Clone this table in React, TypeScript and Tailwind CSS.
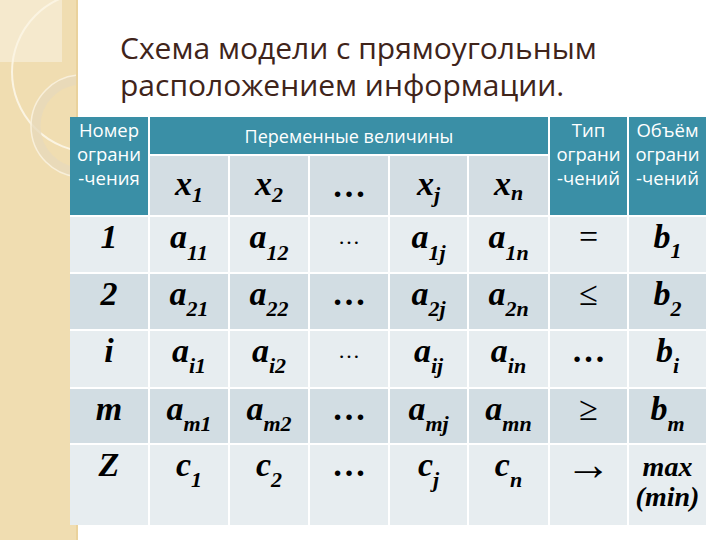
import React from "react";

const teal = "bg-[#3a8fa6]";
const light = "bg-[#e7edf0]";
const dark = "bg-[#d2dde3]";

const math = "font-['Liberation_Serif',serif] font-bold italic text-[34px] leading-[32px] text-black";

// letter with a lowered index
const Sub = ({ base, idx, drop = "top-[11px]" }: { base: string; idx: string; drop?: string }) => (
  <span className={math}>
    {base}
    <span className={`relative ${drop} text-[22px]`}>{idx}</span>
  </span>
);

const Cell = ({
  bg,
  children,
  className = "",
}: {
  bg: string;
  children?: React.ReactNode;
  className?: string;
}) => (
  <div className={`${bg} flex justify-center items-start pt-[4px] ${className}`}>{children}</div>
);

const Dots = ({ big }: { big?: boolean }) =>
  big ? (
    <span className="font-['Liberation_Serif',serif] font-bold text-[34px] leading-[32px]">…</span>
  ) : (
    <span className="font-['Liberation_Serif',serif] text-[22px] leading-[32px]">…</span>
  );

const Sign = ({ s, className = "text-[34px]" }: { s: string; className?: string }) => (
  <span className={`font-['Liberation_Serif',serif] leading-[32px] ${className}`}>{s}</span>
);

type Row = { bg: string; label: string; cells: React.ReactNode[] };

const rows: Row[] = [
  {
    bg: light,
    label: "1",
    cells: [
      <Sub base="a" idx="11" drop="top-[12px]" />,
      <Sub base="a" idx="12" drop="top-[12px]" />,
      <Dots />,
      <Sub base="a" idx="1j" drop="top-[12px]" />,
      <Sub base="a" idx="1n" drop="top-[12px]" />,
      <Sign s="=" />,
      <Sub base="b" idx="1" drop="top-[10px]" />,
    ],
  },
  {
    bg: dark,
    label: "2",
    cells: [
      <Sub base="a" idx="21" />,
      <Sub base="a" idx="22" />,
      <Dots big />,
      <Sub base="a" idx="2j" />,
      <Sub base="a" idx="2n" />,
      <Sign s="≤" />,
      <Sub base="b" idx="2" />,
    ],
  },
  {
    bg: light,
    label: "i",
    cells: [
      <Sub base="a" idx="i1" />,
      <Sub base="a" idx="i2" />,
      <Dots />,
      <Sub base="a" idx="ij" />,
      <Sub base="a" idx="in" />,
      <Dots big />,
      <Sub base="b" idx="i" />,
    ],
  },
  {
    bg: dark,
    label: "m",
    cells: [
      <Sub base="a" idx="m1" />,
      <Sub base="a" idx="m2" />,
      <Dots big />,
      <Sub base="a" idx="mj" />,
      <Sub base="a" idx="mn" />,
      <Sign s="≥" />,
      <Sub base="b" idx="m" />,
    ],
  },
  {
    bg: light,
    label: "Z",
    cells: [
      <Sub base="c" idx="1" />,
      <Sub base="c" idx="2" />,
      <Dots big />,
      <Sub base="c" idx="j" />,
      <Sub base="c" idx="n" />,
      <Sign s="→" className="text-[46px]" />,
      <span className="font-['Liberation_Serif',serif] font-bold italic text-[28px] leading-[30px] text-center pt-[3px]">
        max
        <br />
        (min)
      </span>,
    ],
  },
];

const headText = "font-['Open_Sans',sans-serif] leading-[24px] text-white text-center";

export default function App() {
  return (
    <div className="w-[720px] h-[540px] bg-white overflow-hidden flex">
      {/* beige decorative strip */}
      <div className="w-[78px] shrink-0 h-full bg-[#f0ddb1] border-r-2 border-[#ead29c]">
        <svg width="76" height="540" viewBox="0 0 76 540">
          <rect x="0" y="0" width="62" height="62" fill="#f5e9cd" />
          <circle cx="92" cy="72" r="80" fill="none" stroke="#fbf4e2" strokeWidth="2" />
          <circle cx="82" cy="126" r="46" fill="none" stroke="#e7d9bb" strokeWidth="9" opacity="0.8" />
          <circle cx="82" cy="126" r="51" fill="none" stroke="#f8efda" strokeWidth="1.5" />
        </svg>
      </div>

      <div className="-ml-[8px] flex flex-col">
        <h1 className="pl-[50px] pt-[29px] font-['Open_Sans',sans-serif] text-[30px] leading-[37px] text-[#40241a]">
          Схема модели с прямоугольным
          <br />
          расположением информации.
        </h1>

        <div className="mt-[14px] w-[638px] grid grid-cols-[78px_78px_78px_78px_77px_79px_77px_77px] grid-rows-[37px_59px_55px_55px_56px_54px_80px] gap-[2px] bg-white">
          <div className={`${teal} row-span-2 pt-[1px] text-[18.5px] ${headText}`}>
            Номер
            <br />
            ограни
            <br />
            -чения
          </div>
          <div className={`${teal} col-span-5 flex items-center justify-center text-[18px] ${headText}`}>
            Переменные величины
          </div>
          <div className={`${teal} row-span-2 pt-[1px] text-[18.5px] ${headText}`}>
            Тип
            <br />
            ограни
            <br />
            -чений
          </div>
          <div className={`${teal} row-span-2 pt-[1px] text-[18.5px] ${headText}`}>
            Объём
            <br />
            ограни
            <br />
            -чений
          </div>

          {[
            <Sub base="x" idx="1" drop="top-[7px]" />,
            <Sub base="x" idx="2" drop="top-[7px]" />,
            <Dots big />,
            <Sub base="x" idx="j" drop="top-[7px]" />,
            <Sub base="x" idx="n" drop="top-[5px]" />,
          ].map((c, i) => (
            <div key={i} className="bg-[#d3dde3] flex items-center justify-center">
              {c}
            </div>
          ))}

          {rows.map((r) => (
            <React.Fragment key={r.label}>
              <Cell bg={r.bg}>
                <span className={math}>{r.label}</span>
              </Cell>
              {r.cells.map((c, i) => (
                <Cell key={i} bg={r.bg}>
                  {c}
                </Cell>
              ))}
            </React.Fragment>
          ))}
        </div>
      </div>
    </div>
  );
}
